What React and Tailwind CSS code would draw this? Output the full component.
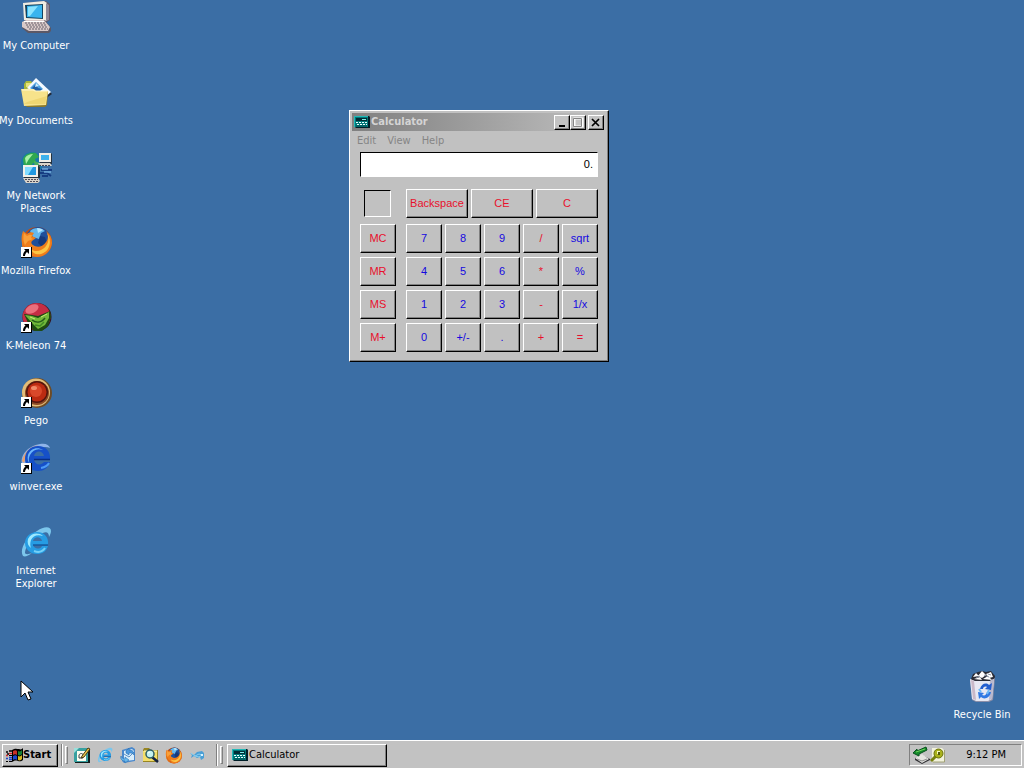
import React from "react";

const UI = "font-['DejaVu_Sans_Condensed','DejaVu_Sans',sans-serif]";
const SANS = "font-['Liberation_Sans',Arial,sans-serif]";
const RAISED =
  "border border-t-white border-l-white border-r-black border-b-black shadow-[inset_-1px_-1px_0_#808080]";
const SUNKEN = "border border-t-[#808080] border-l-[#808080] border-r-white border-b-white";

function Shortcut() {
  return (
    <g>
      <rect x="1" y="21" width="11" height="11" fill="#000" />
      <rect x="1" y="21" width="10" height="10" fill="#fff" />
      <path d="M4 23h5v5l-2-2c-1 1-2 2-2 4H3c0-3 1-4 2.500-5.500z" fill="#000" />
    </g>
  );
}

function ComputerIcon() {
  return (
    <svg viewBox="0 0 32 32" className="size-8" aria-hidden="true">
      <path d="M4 2 26 0l4 3v16l-3 2H6z" fill="#5f5a6c" />
      <path d="M3 2 24 0l3 2v18L4 19z" fill="#f0ece2" />
      <path d="M26 2l3 2v15l-3 1z" fill="#8d8798" />
      <path d="M5 4 23 3v15L6 17z" fill="#14435e" />
      <path d="M7 5 22 4v13L7 16z" fill="#38b4ee" />
      <path d="M8 6 18 5 10 15H8z" fill="#8ae4ff" />
      <path d="M2 22l3-3h20l6 8v3l-2 2H8l-6-5z" fill="#5c5866" />
      <path d="M2 21l4-2h18l6 7-2 4H9l-7-4z" fill="#d9c9c8" />
      <path d="M5 22h20M6 24h21M7 26h21M9 28h19" stroke="#67606c" strokeDasharray="2 1" />
      <path d="M4 20.500h20" stroke="#fff" />
    </svg>
  );
}

function DocumentsIcon() {
  return (
    <svg viewBox="0 0 32 32" className="size-8" aria-hidden="true">
      <path d="M4 8l2-3h5l2 3v6H4z" fill="#a9b83c" />
      <path d="M6 7h5v4H6z" fill="#e6e27a" />
      <path d="M16 3 32 18l-7 5L8 12z" fill="#222a38" />
      <path d="M16 2 31 16l-7 6L7 12z" fill="#f4faff" />
      <path d="M16 6l7 7-6 4-7-5z" fill="#4aa0e0" />
      <path d="M12 12l4-4 2 4 4 1-4 4z" fill="#235fa4" />
      <path d="M16 7l3 3-4 1z" fill="#c9efff" />
      <path d="M2 14h12l2 2h12l-1 13-2 2H7l-3-3z" fill="#8c7a2c" />
      <path d="M1 13h13l2 2h12l-2 14-22 1z" fill="#f7e38b" />
      <path d="M2 14h11l2 1h12" fill="none" stroke="#fff8cf" />
      <path d="M4 28h21l2-8-20 6z" fill="#efd672" />
    </svg>
  );
}

function NetworkIcon() {
  return (
    <svg viewBox="0 0 32 32" className="size-8" aria-hidden="true">
      <circle cx="12" cy="12" r="11" fill="#1878a8" />
      <path d="M3 8c2-5 7-7 13-6l3 4-4 2 1 3-4 2 2 5-4 4-6-5z" fill="#30a850" />
      <path d="M5 7c2-3 5-4 8-4l-4 5-3 5z" fill="#a8f0a4" />
      <path d="M14 10l6 2v5l-5 2z" fill="#48b060" />
      <path d="M20 3l11-1 1 1v10H20z" fill="#26323f" />
      <path d="M19 2h12v9H19z" fill="#f0eee6" />
      <path d="M21 4h8v5h-8z" fill="#3eb2ec" />
      <path d="M18 12h12l2 3H20z" fill="#d9d3c9" />
      <path d="M19 14.500h12" stroke="#454550" strokeDasharray="2 1" />
      <path d="M4 14h14l2 2v11H4z" fill="#26323f" />
      <path d="M3 14h15v12H3z" fill="#f3f0e8" />
      <path d="M5 16h11v8H5z" fill="#2299e0" />
      <path d="M5 16h8l-5 8H5z" fill="#83dcff" />
      <path d="M3 27h15l2 3-2 2H6z" fill="#d9d3c9" />
      <path d="M5 28.500h13M7 30.500h12" stroke="#504c58" strokeDasharray="2 1" />
      <path d="M21 19h11M20 22h7l4 3M22 25h6" fill="none" stroke="#163c82" strokeWidth="2" />
      <path d="M22 18h6M24 21h7" stroke="#8fd0ff" />
    </svg>
  );
}

function Firefox({ className, shortcut = false }) {
  return (
    <svg viewBox="0 0 32 32" className={className} aria-hidden="true">
      <circle cx="17" cy="16" r="15" fill="#c74d0c" />
      <circle cx="18" cy="13" r="12" fill="#1f4f9a" />
      <path d="M10 5c4-4 11-4 15 0l-4 2-2 6-6-2z" fill="#66b9ee" />
      <path d="M17 2c3 0 5 1 6 2l-5 3z" fill="#b8e8ff" />
      <path d="M20 10l5 1 2 6-5 4-4-4z" fill="#163a7c" />
      <path
        d="M3 5l4 3c2-2 5-2 7-1l-2 3 4 2-4 3c-1 1-1 3 1 4 4 3 10 2 13-3 3-4 2-8 0-11 4 3 6 7 6 12-1 8-7 14-15 14C8 31 2 25 2 17 1 12 2 8 3 5z"
        fill="#ef7d1b"
      />
      <path d="M27 7c3 6 1 14-6 17-4 2-8 1-10-1 1 4 5 6 10 5 8-2 12-12 6-21z" fill="#fcc544" />
      <path d="M4 7l3 3c3-2 4-1 5-1l-1 3 2 1-5 2-3 4c-2-4-2-8-1-12z" fill="#f9a03a" />
      <path d="M3 16c1 6 4 11 10 13-5-1-9-5-10-13z" fill="#972a0a" />
      {shortcut && <Shortcut />}
    </svg>
  );
}

function KMeleonIcon() {
  return (
    <svg viewBox="0 0 32 32" className="size-8" aria-hidden="true">
      <ellipse cx="17" cy="16" rx="14.500" ry="14" fill="#34151e" />
      <ellipse cx="16.500" cy="15.500" rx="14" ry="13.500" fill="#c52d44" />
      <ellipse cx="12" cy="8" rx="7" ry="4" fill="#ea6f7c" transform="rotate(-25 12 8)" />
      <path d="M4 13l8 1 6 1 12-5 1 6-3 9-6 5-8 0-6-8z" fill="#1e4c13" />
      <path d="M5 14l7 1 6 2 11-6v6l-4 7-7 4-6-6z" fill="#72b83a" />
      <path d="M12 19c4 3 9 3 13-2" fill="none" stroke="#245b1b" strokeWidth="1.500" />
      <path d="M15 24l5 1 4-4" fill="none" stroke="#3f8a24" strokeWidth="1.500" />
      <path d="M21 16l6-3M10 16l5 2" stroke="#c4ed73" />
      <Shortcut />
    </svg>
  );
}

function PegoIcon() {
  return (
    <svg viewBox="0 0 32 32" className="size-8" aria-hidden="true">
      <circle cx="17" cy="17" r="15" fill="#6e4b25" />
      <circle cx="16" cy="16.500" r="14" fill="#e2bc78" />
      <circle cx="17" cy="17" r="12" fill="#8c4924" />
      <circle cx="17" cy="16" r="11" fill="#54160e" />
      <circle cx="17" cy="16" r="9.500" fill="#bb2b12" />
      <circle cx="16" cy="15" r="6" fill="#d9482a" />
      <ellipse cx="14" cy="12" rx="3" ry="2" fill="#f08a68" />
      <Shortcut />
    </svg>
  );
}

function WinverIcon() {
  return (
    <svg viewBox="0 0 32 32" className="size-8" aria-hidden="true">
      <path d="M2 22C0 13 8 4 20 2c6-1 9 1 10 4-6-3-20 0-24 16z" fill="#8fb4e8" />
      <path d="M2 19C4 10 10 5 18 3 11 7 7 12 4 21z" fill="#e6a070" />
      <path
        d="M18 4c8 0 13 6 12 14H14c1 5 7 6 10 2h6c-2 6-6 9-12 9C10 29 5 24 5 17S10 4 18 4zm-4 10h10c-1-6-9-6-10 0z"
        fill="#1650c8"
      />
      <path d="M8 13c2-6 9-9 15-5-6-2-10 0-13 5-2 4-1 7 0 9-2-2-3-5-2-9z" fill="#6cb6fb" />
      <path d="M14 17.500h16" stroke="#092d83" strokeWidth="1.500" />
      <path d="M21 26c5-1 7-3 8-5" fill="none" stroke="#4d9bf4" strokeWidth="2" />
      <Shortcut />
    </svg>
  );
}

function ExplorerIcon({ className }) {
  return (
    <svg viewBox="0 0 32 32" className={className} aria-hidden="true">
      <path
        d="M3 30C-1 24 6 11 17 5c7-5 14-5 14 0 0 2-1 4-2 6 0-6-4-6-10-2C10 13 5 22 5 27c1 2 4 1 7 0-4 3-7 4-9 3z"
        fill="#7cc6ec"
      />
      <path
        d="M17 6c8 0 12 6 11 13H13c1 4 7 5 9 1h6c-2 6-6 8-11 8-7 0-12-5-12-11S10 6 17 6zm-4 9h9c-1-5-8-5-9 0z"
        fill="#269ce3"
      />
      <path d="M8 13c3-6 10-7 15-3-6-2-10 0-12 4-1 3-1 6 0 8-3-2-4-5-3-9z" fill="#9ce8ff" />
      <path d="M13 19h15" stroke="#135aa0" strokeWidth="1.500" />
      <path d="M14 25c5 2 9 0 11-3" fill="none" stroke="#75d0f7" strokeWidth="2" />
    </svg>
  );
}

function RecycleIcon() {
  return (
    <svg viewBox="0 0 32 32" className="size-8" aria-hidden="true">
      <path d="M5 9l2-5 5-2 4-1 4 1 5-1 4 5-1 6H6z" fill="#292b35" />
      <path d="M7 7l3-4 3 3zM12 6l4-5 4 4-4 3zM20 4l5-2 2 5-4 1zM8 9l6-2 2 3zM17 9l5-3 4 4z" fill="#fff" />
      <path d="M10 8l4-2M18 5l5 2M22 4l3 1" stroke="#8793a6" />
      <path d="M4 9l4 2h16l5-3-2 22-4 2H10l-4-2z" fill="#8c8fa8" />
      <path d="M4 9l5 2h15l4-2-2 20-4 2H10l-4-2z" fill="#e7e8f3" />
      <path d="M5 10l3 1 2 19-3-1z" fill="#c9b8c8" />
      <path d="M24 11l4-2-2 20-3 1z" fill="#b8b8ce" />
      <path d="M14 19c1-5 6-7 9-4l3-2-1 7-6-1 2-2c-2-1-4 0-4 2z" fill="#235fd0" />
      <path d="M25 22c-1 6-7 8-10 5l-2 2-1-7 6 1-2 2c3 1 4 0 5-3z" fill="#3179e3" />
      <path d="M13 19l2 3M21 24l2-4" stroke="#6cb9f6" strokeWidth="2" />
    </svg>
  );
}

function CalcIcon({ className }) {
  return (
    <svg viewBox="0 0 16 16" className={className} aria-hidden="true">
      <path d="M1 2h14l1 1v11H2l-1-1z" fill="#001f28" />
      <path d="M0 2h14v11H0z" fill="#007878" />
      <path d="M0 2.500h14M.5 2v11" stroke="#20b8b8" />
      <path d="M2 4h11v3H2z" fill="#002c35" />
      <path d="M8 5.500h4" stroke="#7cf0e8" />
      <path d="M2 8.500h11M3 10.500h10" stroke="#e8ffff" strokeDasharray="2 1" />
      <path d="M2 12h11" stroke="#004c50" />
    </svg>
  );
}

function WindowsLogo() {
  return (
    <svg viewBox="0 0 17 16" className="h-4 w-[17px] shrink-0" aria-hidden="true">
      <path d="M6 3c3-2 5-1 7-1 2 1 3 0 4-1v12c-2 2-4 1-5 1-3-1-4 0-6 1z" fill="#000" />
      <path d="M7 4c2-1 3-1 4 0v4c-1-1-3-1-4 0z" fill="#c83028" />
      <path d="M12 4c2 1 3 0 4-1v4c-1 1-2 2-4 1z" fill="#158034" />
      <path d="M7 9c2-1 3-1 4 0v4c-1-1-3-1-4 0z" fill="#1846cf" />
      <path d="M12 9c2 1 3 0 4-1v4c-1 1-2 2-4 1z" fill="#d8b820" />
      <path d="M0 5h2M3 4h3M1 7h2" stroke="#000" strokeWidth="1.500" />
      <path d="M3 6.500h3M0 8.500h2" stroke="#d72828" strokeWidth="1.500" />
      <path d="M3 10.500h3M0 11.500h2M3 12.500h3" stroke="#2145c8" strokeWidth="1.500" />
      <path d="M0 14.500h2M3 14.500h3M3 8.500h3" stroke="#000" />
    </svg>
  );
}

function DesktopPadIcon() {
  return (
    <svg viewBox="0 0 18 18" className="size-[18px]" aria-hidden="true">
      <path d="M2 3h15v14H2z" fill="#101c1c" />
      <path d="M1 2h14v14H1z" fill="#38a0a0" />
      <path d="M4 5h9v10H4z" fill="#fffef0" />
      <path d="M1 2h5l-5 5z" fill="#9ce0dc" />
      <path d="M6 9c1-2 4-2 4 0v3H6z" fill="none" stroke="#344048" />
      <path d="M9 10 15 2l2 1-6 8-3 1z" fill="#e8c848" stroke="#4c3a16" />
    </svg>
  );
}

function OutlookIcon() {
  return (
    <svg viewBox="0 0 18 18" className="size-[18px]" aria-hidden="true">
      <path d="M3 4l10-3 3 2v12l-11 2-2-2z" fill="#4a88cc" />
      <path d="M5 5l8-2 2 2v9l-9 1-1-1z" fill="#d9eefb" />
      <path d="M5 8l5 3 5-5" fill="none" stroke="#5d91c6" />
      <path d="M7 7V5l3-3v2c4 0 5 2 5 5-1-2-3-2-5-2v2z" fill="#4c98dc" stroke="#2870b3" strokeWidth=".6" />
      <path d="M2 10c-1 3 1 5 4 5v2l4-3-4-3v2c-2 0-3-1-4-3z" fill="#68b8ec" stroke="#2870b3" strokeWidth=".6" />
    </svg>
  );
}

function SearchFolderIcon() {
  return (
    <svg viewBox="0 0 18 18" className="size-[18px]" aria-hidden="true">
      <path d="M1 4l1-2h5l2 2h7v12H1z" fill="#988522" />
      <path d="M1 5h14v10H1z" fill="#f4de69" />
      <path d="M2 5h13" stroke="#fffbc0" />
      <path d="M10 11l6 5" stroke="#14213f" strokeWidth="2.500" />
      <circle cx="8" cy="8" r="4" fill="#c5f2ef" stroke="#2c5d66" strokeWidth="1.500" />
      <path d="M6 7l2-1" stroke="#fff" />
    </svg>
  );
}

function FishIcon() {
  return (
    <svg viewBox="0 0 18 18" className="size-[18px]" aria-hidden="true">
      <path d="M2 7l4 2 3-3 5-1 2 2v5l-3 2-1-3-3 1-3-2-3 2 1-3z" fill="#4a9fd6" />
      <path d="M3 7l4 3 4-2 3 1-3 2-4-1" fill="none" stroke="#89d0f1" />
      <path d="M13 8h2v2h-2z" fill="#d9f4ff" />
    </svg>
  );
}

function EjectIcon() {
  return (
    <svg viewBox="0 0 18 18" className="size-[18px]" aria-hidden="true">
      <path d="M3 12l7-3 8 4v1l-8 4-7-4z" fill="#303034" />
      <path d="M3 12l7-4 7 5-7 4z" fill="#e4e4e0" />
      <path d="M5 13l5 2 5-2" fill="none" stroke="#8c8c8c" />
      <path d="M1 7l4-4v2l9-4 1 3-8 4v2z" fill="#15892b" stroke="#06511c" />
      <path d="M4 6l9-3" stroke="#6ed55a" />
    </svg>
  );
}

function TrayKeyIcon() {
  return (
    <svg viewBox="0 0 16 16" className="size-4" aria-hidden="true">
      <path d="M2 1h10l2 2v12H2z" fill="#f2f2dc" />
      <path d="M14.500 3v12H3" fill="none" stroke="#a1a176" />
      <path d="M1 14 6 9" stroke="#77800f" strokeWidth="3" />
      <circle cx="8.500" cy="6.500" r="4.500" fill="#a9b11b" stroke="#68700d" />
      <path d="M7 4h3v3H7z" fill="#f6f7bb" />
      <path d="M8 5h2v3H8z" fill="#505710" />
    </svg>
  );
}

const ICONS = [
  { label: "My Computer", place: "-left-1 top-px", icon: <ComputerIcon /> },
  { label: "My Documents", place: "-left-1 top-[76px]", icon: <DocumentsIcon /> },
  { label: "My Network Places", place: "-left-1 top-[151px]", icon: <NetworkIcon /> },
  { label: "Mozilla Firefox", place: "-left-1 top-[226px]", icon: <Firefox className="size-8" shortcut /> },
  { label: "K-Meleon 74", place: "-left-1 top-[301px]", icon: <KMeleonIcon /> },
  { label: "Pego", place: "-left-1 top-[376px]", icon: <PegoIcon /> },
  { label: "winver.exe", place: "-left-1 top-[442px]", icon: <WinverIcon /> },
  { label: "Internet Explorer", place: "-left-1 top-[526px]", icon: <ExplorerIcon className="size-8" /> },
  { label: "Recycle Bin", place: "right-[2px] bottom-[19px]", icon: <RecycleIcon /> },
];

function DesktopIcon({ label, place, icon }) {
  return (
    <button
      type="button"
      className={`absolute ${place} flex w-20 flex-col items-center gap-[6px] text-[11px] leading-[13px] text-white ${UI}`}
    >
      {icon}
      <span className="text-center">{label}</span>
    </button>
  );
}

const MEMORY = ["MC", "MR", "MS", "M+"];
const KEYS = [
  "7", "8", "9", "/", "sqrt",
  "4", "5", "6", "*", "%",
  "1", "2", "3", "-", "1/x",
  "0", "+/-", ".", "+", "=",
];
const OPERATORS = ["/", "*", "-", "+", "="];

function Key({ children, red = false }) {
  return (
    <button
      type="button"
      className={`flex h-[29px] w-full items-center justify-center text-[11px] ${RAISED} ${SANS} ${
        red ? "text-[#e8102c]" : "text-[#1408e0]"
      }`}
    >
      {children}
    </button>
  );
}

function Caption({ label, children }) {
  return (
    <button
      type="button"
      aria-label={label}
      className={`flex h-[15px] w-4 items-center justify-center bg-[#c4c4c4] ${RAISED}`}
    >
      {children}
    </button>
  );
}

function Calculator() {
  return (
    <section
      aria-label="Calculator"
      className={`absolute left-[349px] top-[110px] w-[260px] bg-[#c1c1c1] p-[2px] pb-[9px] ${RAISED}`}
    >
      <header className="flex h-[18px] items-center bg-linear-to-r from-[#808080] to-[#c0c0c0] px-[2px]">
        <CalcIcon className="size-4" />
        <h1 className={`ml-px flex-1 text-[11px] font-bold text-[#d4d4d4] ${UI}`}>Calculator</h1>
        <Caption label="Minimize">
          <svg viewBox="0 0 12 11" className="h-[11px] w-3" aria-hidden="true">
            <path d="M3 8h6v2H3z" />
          </svg>
        </Caption>
        <Caption label="Maximize">
          <svg viewBox="0 0 12 11" className="h-[11px] w-3" aria-hidden="true">
            <path d="M2.500 1.500h8v8h-8z" fill="none" stroke="#fff" strokeWidth="2" />
            <path d="M1.500 1.500h8v8h-8z" fill="none" stroke="#858585" />
          </svg>
        </Caption>
        <span className="w-[2px]" />
        <Caption label="Close">
          <svg viewBox="0 0 12 11" className="h-[11px] w-3" aria-hidden="true">
            <path d="M2 2l7 7M9 2l-7 7" stroke="#000" strokeWidth="1.700" />
          </svg>
        </Caption>
      </header>
      <nav className={`flex h-[21px] items-center gap-[11px] pl-[5px] text-[11px] text-[#858585] ${UI}`}>
        <button type="button">Edit</button>
        <button type="button">View</button>
        <button type="button">Help</button>
      </nav>
      <div className="flex flex-col px-2">
        <input
          readOnly
          aria-label="Display"
          defaultValue="0."
          className={`h-[25px] w-full border border-t-black border-l-black border-r-white border-b-white bg-white pr-1 pb-px text-right text-[11px] text-black outline-none ${SANS}`}
        />
        <div className="mt-3 flex items-center gap-[15px] pl-1">
          <output
            aria-label="Memory"
            className="size-[27px] border border-t-black border-l-black border-r-white border-b-white"
          />
          <div className="grid flex-1 grid-cols-3 gap-[3px]">
            {["Backspace", "CE", "C"].map((k) => (
              <Key key={k} red>
                {k}
              </Key>
            ))}
          </div>
        </div>
        <div className="mt-[6px] flex gap-[10px]">
          <div className="flex w-9 flex-col gap-1">
            {MEMORY.map((k) => (
              <Key key={k} red>
                {k}
              </Key>
            ))}
          </div>
          <div className="grid flex-1 grid-cols-5 gap-x-[3px] gap-y-1">
            {KEYS.map((k) => (
              <Key key={k} red={OPERATORS.includes(k)}>
                {k}
              </Key>
            ))}
          </div>
        </div>
      </div>
    </section>
  );
}

function Grip() {
  return (
    <span className="flex items-center gap-[2px]">
      <span className="h-[22px] w-[2px] border-l border-r border-l-[#808080] border-r-white" />
      <span className="h-[18px] w-[3px] border border-t-white border-l-white border-r-[#808080] border-b-[#808080]" />
    </span>
  );
}

const LAUNCH = [
  { label: "Show Desktop", icon: <DesktopPadIcon /> },
  { label: "Internet Explorer", icon: <ExplorerIcon className="size-4" /> },
  { label: "Outlook Express", icon: <OutlookIcon /> },
  { label: "Search", icon: <SearchFolderIcon /> },
  { label: "Mozilla Firefox", icon: <Firefox className="size-[17px]" /> },
  { label: "Messenger", icon: <FishIcon /> },
];

function Taskbar() {
  return (
    <footer
      className={`flex h-7 items-center border-t border-white bg-[#c2c2c2] px-[2px] pt-px text-[11px] text-black ${UI}`}
    >
      <button
        type="button"
        className={`flex h-[23px] w-14 items-center pl-[3px] font-bold ${RAISED}`}
      >
        <WindowsLogo />
        Start
      </button>
      <span className="ml-[3px]">
        <Grip />
      </span>
      <nav aria-label="Quick Launch" className="ml-[2px] flex">
        {LAUNCH.map((item) => (
          <button
            key={item.label}
            type="button"
            aria-label={item.label}
            className="flex h-[22px] w-[23px] items-center justify-center"
          >
            {item.icon}
          </button>
        ))}
      </nav>
      <span className="ml-2">
        <Grip />
      </span>
      <button
        type="button"
        className={`ml-1 flex h-[23px] w-[160px] items-center gap-px pl-[4px] ${RAISED}`}
      >
        <CalcIcon className="size-4" />
        Calculator
      </button>
      <div className={`ml-auto flex h-[22px] items-center pl-[2px] pr-[15px] ${SUNKEN}`}>
        <EjectIcon />
        <TrayKeyIcon />
        <time className="ml-5">9:12 PM</time>
      </div>
    </footer>
  );
}

export default function App() {
  return (
    <div className="flex min-h-screen flex-col bg-[#3b6ea5]">
      <main className="relative flex-1 overflow-hidden">
        {ICONS.map((item) => (
          <DesktopIcon key={item.label} {...item} />
        ))}
        <Calculator />
        <svg viewBox="0 0 14 22" className="absolute left-5 top-[680px] h-[22px] w-[14px]" aria-hidden="true">
          <path d="M1 1v16l4-4 3 7 3-1-3-7h5z" fill="#fff" stroke="#000" />
        </svg>
      </main>
      <Taskbar />
    </div>
  );
}
